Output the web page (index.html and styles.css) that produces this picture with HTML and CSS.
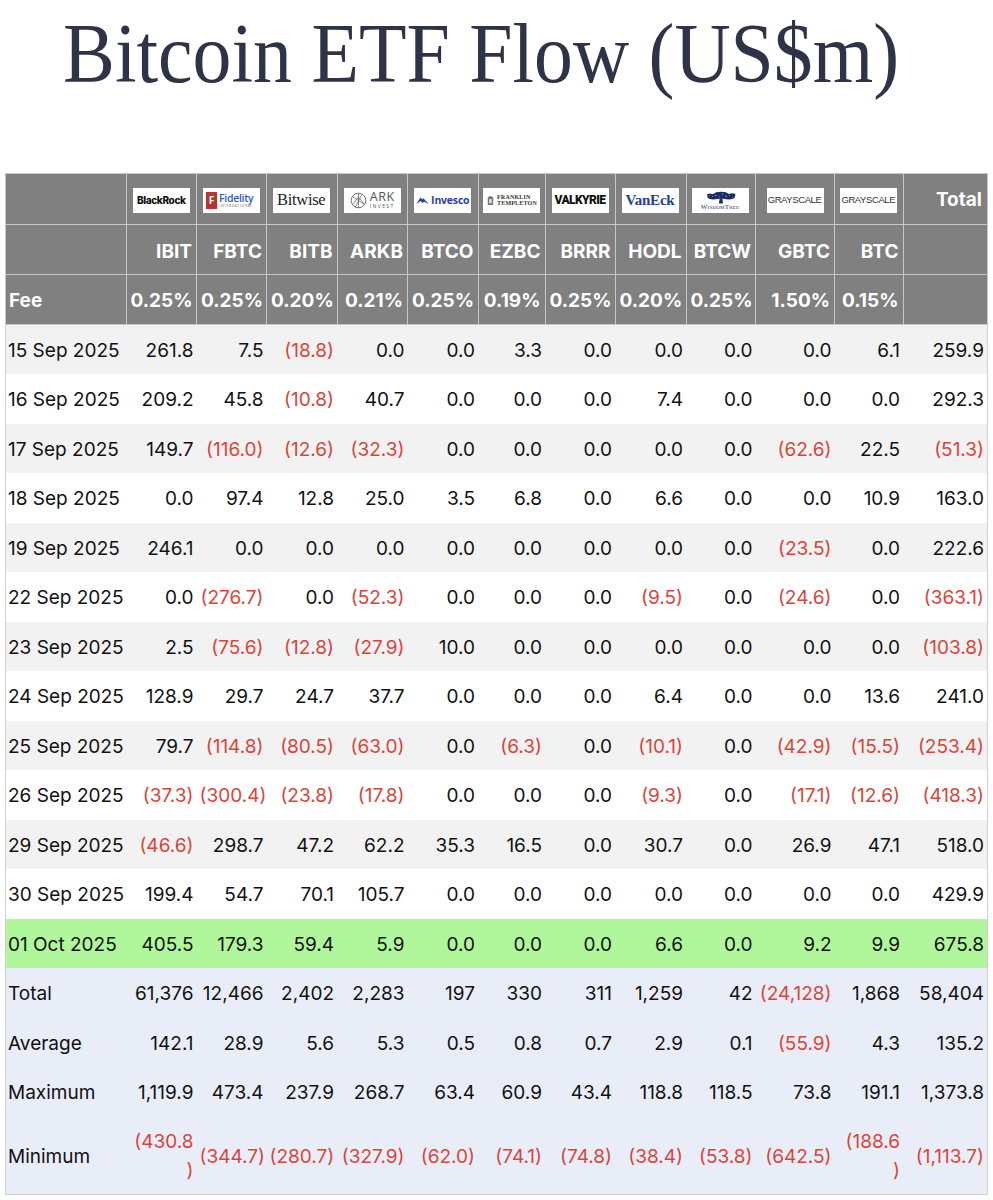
FILE: index.html
```html
<!DOCTYPE html>
<html lang="en">
<head>
<meta charset="utf-8">
<title>Bitcoin ETF Flow (US$m)</title>
<link rel="stylesheet" href="styles.css">
</head>
<body>
<div class="page">
  <h1 class="title">Bitcoin ETF Flow (US$m)</h1>
  <table class="flow">
    <colgroup>
      <col class="c-date"><col class="c-ibit"><col class="c-fbtc"><col class="c-bitb"><col class="c-arkb"><col class="c-btco"><col class="c-ezbc"><col class="c-brrr"><col class="c-hodl"><col class="c-btcw"><col class="c-gbtc"><col class="c-btc"><col class="c-total">
    </colgroup>
    <thead>
      <tr class="hr-logo">
        <th></th>
        <th class="lc"><div class="logo lg-blackrock">BlackRock</div></th>
        <th class="lc"><div class="logo lg-fid"><span class="fid-f">F</span><span class="fid-txt"><span class="fid-name">Fidelity</span><span class="fid-int">INTERNATIONAL</span></span></div></th>
        <th class="lc"><div class="logo lg-bitwise">Bitwise<span class="tm">·</span></div></th>
        <th class="lc"><div class="logo lg-ark"><svg class="ark-ico" viewBox="0 0 20 20" width="17" height="17"><circle cx="10" cy="10" r="8.6" fill="none" stroke="#666" stroke-width="1.1"/><path d="M10 1.4 L10 18.6 M3 5.5 L17 14.5 M3 14.5 L10 6 L17 14.5 M6 18 L14 3" fill="none" stroke="#666" stroke-width="0.9"/></svg><span class="ark-txt"><span class="ark-name">ARK</span><span class="ark-sub">INVEST</span></span></div></th>
        <th class="lc"><div class="logo lg-inv"><svg viewBox="0 0 14 9" width="13" height="8"><path d="M0 9 L5 1.5 L6.5 4 L8 2.5 L14 9 L9 6.5 L7 8 L5 5.5 Z" fill="#2a3fb0"/></svg><span class="inv-name">Invesco</span></div></th>
        <th class="lc"><div class="logo lg-ft"><svg viewBox="0 0 10 11" width="9" height="10"><path d="M2 11 L2 6 Q1 2 5 1 Q9 2 8 6 L8 11 Z" fill="#777"/><path d="M3.5 5 Q5 3 6.5 5 L6.5 9 L3.5 9 Z" fill="#ddd"/></svg><span class="ft-txt"><span>FRANKLIN</span><span>TEMPLETON</span></span></div></th>
        <th class="lc"><div class="logo lg-valk">VALKYRIE</div></th>
        <th class="lc"><div class="logo lg-vaneck">VanEck<span class="tm">·</span></div></th>
        <th class="lc"><div class="logo lg-wt"><svg viewBox="0 0 40 14" width="34" height="13"><g fill="#1d2a6b"><ellipse cx="20" cy="5" rx="12.5" ry="3.6"/><ellipse cx="11" cy="6.4" rx="7" ry="3"/><ellipse cx="29" cy="6.4" rx="7.5" ry="3"/><ellipse cx="20" cy="2.6" rx="8" ry="2.5"/><ellipse cx="7" cy="4.2" rx="3.5" ry="2"/><ellipse cx="33" cy="4" rx="4" ry="2"/><path d="M18.4 8 L21.6 8 L22.4 14 L17.6 14 Z"/></g><g fill="#fff"><circle cx="14" cy="4.5" r="0.6"/><circle cx="22" cy="3" r="0.6"/><circle cx="26" cy="5.5" r="0.6"/><circle cx="18" cy="6" r="0.5"/><circle cx="10" cy="6" r="0.5"/><circle cx="30" cy="4.5" r="0.5"/><circle cx="34" cy="6.5" r="0.5"/><circle cx="6" cy="4.5" r="0.5"/></g></svg><span class="wt-name">WisdomTree<span class="tm">·</span></span></div></th>
        <th class="lc"><div class="logo lg-gs">GRAYSCALE<span class="tm">·</span></div></th>
        <th class="lc"><div class="logo lg-gs">GRAYSCALE<span class="tm">·</span></div></th>
        <th class="hd-total">Total</th>
      </tr>
      <tr class="hr-tick">
        <th></th><th>IBIT</th><th>FBTC</th><th>BITB</th><th>ARKB</th><th>BTCO</th><th>EZBC</th><th>BRRR</th><th>HODL</th><th>BTCW</th><th>GBTC</th><th>BTC</th><th></th>
      </tr>
      <tr class="hr-fee">
        <th class="fee-label">Fee</th><th>0.25%</th><th>0.25%</th><th>0.20%</th><th>0.21%</th><th>0.25%</th><th>0.19%</th><th>0.25%</th><th>0.20%</th><th>0.25%</th><th>1.50%</th><th>0.15%</th><th></th>
      </tr>
    </thead>
    <tbody>
      <tr class="r-alt"><td class="d">15 Sep 2025</td><td>261.8</td><td>7.5</td><td class="neg">(18.8)</td><td>0.0</td><td>0.0</td><td>3.3</td><td>0.0</td><td>0.0</td><td>0.0</td><td>0.0</td><td>6.1</td><td>259.9</td></tr>
      <tr><td class="d">16 Sep 2025</td><td>209.2</td><td>45.8</td><td class="neg">(10.8)</td><td>40.7</td><td>0.0</td><td>0.0</td><td>0.0</td><td>7.4</td><td>0.0</td><td>0.0</td><td>0.0</td><td>292.3</td></tr>
      <tr class="r-alt"><td class="d">17 Sep 2025</td><td>149.7</td><td class="neg">(116.0)</td><td class="neg">(12.6)</td><td class="neg">(32.3)</td><td>0.0</td><td>0.0</td><td>0.0</td><td>0.0</td><td>0.0</td><td class="neg">(62.6)</td><td>22.5</td><td class="neg">(51.3)</td></tr>
      <tr><td class="d">18 Sep 2025</td><td>0.0</td><td>97.4</td><td>12.8</td><td>25.0</td><td>3.5</td><td>6.8</td><td>0.0</td><td>6.6</td><td>0.0</td><td>0.0</td><td>10.9</td><td>163.0</td></tr>
      <tr class="r-alt"><td class="d">19 Sep 2025</td><td>246.1</td><td>0.0</td><td>0.0</td><td>0.0</td><td>0.0</td><td>0.0</td><td>0.0</td><td>0.0</td><td>0.0</td><td class="neg">(23.5)</td><td>0.0</td><td>222.6</td></tr>
      <tr><td class="d">22 Sep 2025</td><td>0.0</td><td class="neg">(276.7)</td><td>0.0</td><td class="neg">(52.3)</td><td>0.0</td><td>0.0</td><td>0.0</td><td class="neg">(9.5)</td><td>0.0</td><td class="neg">(24.6)</td><td>0.0</td><td class="neg">(363.1)</td></tr>
      <tr class="r-alt"><td class="d">23 Sep 2025</td><td>2.5</td><td class="neg">(75.6)</td><td class="neg">(12.8)</td><td class="neg">(27.9)</td><td>10.0</td><td>0.0</td><td>0.0</td><td>0.0</td><td>0.0</td><td>0.0</td><td>0.0</td><td class="neg">(103.8)</td></tr>
      <tr><td class="d">24 Sep 2025</td><td>128.9</td><td>29.7</td><td>24.7</td><td>37.7</td><td>0.0</td><td>0.0</td><td>0.0</td><td>6.4</td><td>0.0</td><td>0.0</td><td>13.6</td><td>241.0</td></tr>
      <tr class="r-alt"><td class="d">25 Sep 2025</td><td>79.7</td><td class="neg">(114.8)</td><td class="neg">(80.5)</td><td class="neg">(63.0)</td><td>0.0</td><td class="neg">(6.3)</td><td>0.0</td><td class="neg">(10.1)</td><td>0.0</td><td class="neg">(42.9)</td><td class="neg">(15.5)</td><td class="neg">(253.4)</td></tr>
      <tr><td class="d">26 Sep 2025</td><td class="neg">(37.3)</td><td class="neg">(300.4)</td><td class="neg">(23.8)</td><td class="neg">(17.8)</td><td>0.0</td><td>0.0</td><td>0.0</td><td class="neg">(9.3)</td><td>0.0</td><td class="neg">(17.1)</td><td class="neg">(12.6)</td><td class="neg">(418.3)</td></tr>
      <tr class="r-alt"><td class="d">29 Sep 2025</td><td class="neg">(46.6)</td><td>298.7</td><td>47.2</td><td>62.2</td><td>35.3</td><td>16.5</td><td>0.0</td><td>30.7</td><td>0.0</td><td>26.9</td><td>47.1</td><td>518.0</td></tr>
      <tr><td class="d">30 Sep 2025</td><td>199.4</td><td>54.7</td><td>70.1</td><td>105.7</td><td>0.0</td><td>0.0</td><td>0.0</td><td>0.0</td><td>0.0</td><td>0.0</td><td>0.0</td><td>429.9</td></tr>
      <tr class="r-today"><td class="d">01 Oct 2025</td><td>405.5</td><td>179.3</td><td>59.4</td><td>5.9</td><td>0.0</td><td>0.0</td><td>0.0</td><td>6.6</td><td>0.0</td><td>9.2</td><td>9.9</td><td>675.8</td></tr>
      <tr class="r-sum"><td class="d">Total</td><td>61,376</td><td>12,466</td><td>2,402</td><td>2,283</td><td>197</td><td>330</td><td>311</td><td>1,259</td><td>42</td><td class="neg">(24,128)</td><td>1,868</td><td>58,404</td></tr>
      <tr class="r-sum"><td class="d">Average</td><td>142.1</td><td>28.9</td><td>5.6</td><td>5.3</td><td>0.5</td><td>0.8</td><td>0.7</td><td>2.9</td><td>0.1</td><td class="neg">(55.9)</td><td>4.3</td><td>135.2</td></tr>
      <tr class="r-sum"><td class="d">Maximum</td><td>1,119.9</td><td>473.4</td><td>237.9</td><td>268.7</td><td>63.4</td><td>60.9</td><td>43.4</td><td>118.8</td><td>118.5</td><td>73.8</td><td>191.1</td><td>1,373.8</td></tr>
      <tr class="r-sum r-min"><td class="d">Minimum</td><td class="neg">(430.8<br>)</td><td class="neg">(344.7)</td><td class="neg">(280.7)</td><td class="neg">(327.9)</td><td class="neg">(62.0)</td><td class="neg">(74.1)</td><td class="neg">(74.8)</td><td class="neg">(38.4)</td><td class="neg">(53.8)</td><td class="neg">(642.5)</td><td class="neg">(188.6<br>)</td><td class="neg">(1,113.7)</td></tr>
    </tbody>
  </table>
</div>
</body>
</html>
```
FILE: styles.css
```css
* { box-sizing: border-box; }
html, body { margin: 0; padding: 0; background: #fff; }
body { font-family: Inter, "Noto Sans", sans-serif; color: #111; }

.page { padding: 0 0 20px 5px; }

.title {
  margin: 11px 0 77px 58px;
  font: 400 85px/85px "Liberation Serif", "Times New Roman", serif;
  color: #2f3347;
  white-space: nowrap;
  transform-origin: left center;
  transform: scaleX(0.915);
}

.flow {
  border-collapse: collapse;
  table-layout: fixed;
  width: 982px;
  font-size: 19px;
  border-left: 1px solid #d2d2d2;
  border-right: 1px solid #d2d2d2;
  border-bottom: 1px solid #d2d2d2;
}
.c-date { width: 120.5px; }
.c-ibit { width: 70.5px; }
.c-fbtc { width: 70px; }
.c-bitb { width: 70.5px; }
.c-arkb { width: 70.5px; }
.c-btco { width: 70.5px; }
.c-ezbc { width: 67px; }
.c-brrr { width: 70px; }
.c-hodl { width: 71px; }
.c-btcw { width: 69.5px; }
.c-gbtc { width: 79px; }
.c-btc { width: 68.5px; }
.c-total { width: 84.5px; }

.flow th {
  background: #808080;
  color: #fff;
  font-weight: 700;
  border: 1px solid #c6c6c6;
  padding: 0 4px;
  text-align: right;
  vertical-align: middle;
  white-space: nowrap;
}
.hr-logo th { height: 51px; }
.hr-tick th { height: 50px; padding-top: 3px; }
.hr-fee th { height: 50px; padding-top: 2px; }
.flow th.lc { text-align: center; padding: 2px 0 0; }
.flow th.fee-label { text-align: left; padding-left: 3px; }
.flow th.hd-total { padding-right: 5px; }

.flow td {
  height: 49.5px;
  padding: 2px 3px 0;
  line-height: 29px;
  text-align: right;
  vertical-align: middle;
  white-space: nowrap;
  color: #111;
}
.flow td.d { text-align: left; padding-left: 2px; }
.flow td.neg { color: #d9453b; }
.flow tbody tr { background: #fff; }
.flow tr.r-alt { background: #f2f2f2; }
.flow tr.r-today { background: #b0f79c; }
.flow tr.r-sum { background: #e9edf8; }
.flow tr.r-min td { height: 78px; }

/* logos */
.logo {
  display: inline-flex;
  align-items: center;
  justify-content: center;
  width: 57px;
  height: 25px;
  background: #fff;
  vertical-align: middle;
  overflow: hidden;
  color: #111;
  line-height: 1;
}
.tm { font-size: 4px; align-self: flex-start; margin-top: 7px; color: #777; }

.lg-blackrock { font: 800 10px/1 Inter, sans-serif; letter-spacing: -0.35px; color: #111; }

.lg-fid { gap: 2px; justify-content: flex-start; padding-left: 3px; }
.fid-f { display: inline-flex; align-items: center; justify-content: center; width: 11px; height: 17px; background: #b63530; color: #fff; font: 700 10px/1 "Open Sans", sans-serif; flex: none; }
.fid-txt { display: flex; flex-direction: column; align-items: center; }
.fid-name { font: 600 10.5px/1 "Open Sans", sans-serif; color: #3559b6; letter-spacing: -0.3px; }
.fid-int { font: 600 3.5px/1 "Open Sans", sans-serif; color: #999; letter-spacing: 0.4px; margin-top: 1px; }

.lg-bitwise { font: 400 16.5px/1 "Liberation Serif", serif; color: #222; letter-spacing: -0.3px; }

.lg-ark { gap: 3px; }
.ark-txt { display: flex; flex-direction: column; align-items: center; color: #555; }
.ark-name { font: 400 12.5px/1 "Open Sans", sans-serif; letter-spacing: 0.6px; }
.ark-sub { font: 400 5px/1 "Open Sans", sans-serif; letter-spacing: 1.4px; margin-top: 1px; }

.lg-inv { gap: 2px; }
.inv-name { font: 700 10.5px/1 "Open Sans", sans-serif; color: #2a3fb0; letter-spacing: -0.2px; }

.lg-ft { gap: 2px; }
.ft-txt { display: flex; flex-direction: column; align-items: flex-start; font: 700 6px/1.1 "Liberation Serif", serif; color: #333; letter-spacing: 0.2px; }

.lg-valk { font: 900 12px/1 Roboto, sans-serif; letter-spacing: -0.6px; color: #111; }

.lg-vaneck { font: 700 15px/1 "Liberation Serif", serif; color: #24418f; letter-spacing: -0.2px; }

.lg-wt { flex-direction: column; gap: 0; padding-top: 1px; }
.wt-name { font: 400 7px/1 "Liberation Serif", serif; color: #1d2a6b; font-variant: small-caps; letter-spacing: 0.2px; margin-top: 0; }
.wt-name .tm { margin-top: 0; }

.lg-gs { font: 400 9.5px/1 "Liberation Sans", sans-serif; color: #333; letter-spacing: -0.4px; }
.lg-gs .tm { margin-top: 8px; }
```
